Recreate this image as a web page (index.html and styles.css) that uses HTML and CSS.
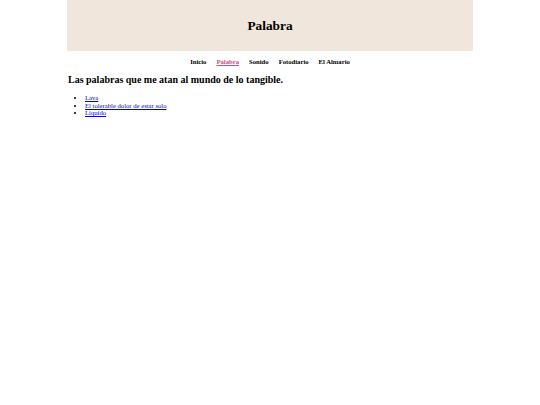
FILE: index.html
```html
<!DOCTYPE html>
<html lang="es">
<head>
<meta charset="utf-8">
<title>Palabra</title>
<link rel="stylesheet" href="styles.css">
</head>
<body>
<div class="page">
  <header class="banner">
    <h1 class="title">Palabra</h1>
  </header>
  <nav class="menu">
    <a class="menu-item" href="#">Inicio</a>
    <a class="menu-item active" href="#">Palabra</a>
    <a class="menu-item" href="#">Sonido</a>
    <a class="menu-item" href="#">Fotodiario</a>
    <a class="menu-item" href="#">El Almario</a>
  </nav>
  <main class="content">
    <h2 class="lead">Las palabras que me atan al mundo de lo tangible.</h2>
    <ul class="posts">
      <li><a href="#">Lava</a></li>
      <li><a href="#">El tolerable dolor de estar solo</a></li>
      <li><a href="#">Líquido</a></li>
    </ul>
  </main>
</div>
</body>
</html>
```

FILE: styles.css
```css
html, body {
  margin: 0;
  padding: 0;
  background: #ffffff;
}
body {
  font-family: "Liberation Serif", "Times New Roman", serif;
  color: #000;
}
.page {
  width: 406px;
  margin: 0 auto;
}
.banner {
  background: #f0e6dc;
  height: 51px;
  display: flex;
  align-items: center;
  justify-content: center;
}
.title {
  margin: 0;
  font-size: 13.33px;
  font-weight: bold;
  line-height: 1;
}
.menu {
  display: flex;
  justify-content: center;
  gap: 10px;
  margin-top: 7px;
  font-size: 6.67px;
  line-height: 8px;
}
.menu-item {
  color: #000;
  font-weight: bold;
  text-decoration: none;
}
.menu-item.active {
  color: #c8508a;
  text-decoration: underline;
}
.content {
  padding-left: 1px;
}
.lead {
  margin: 8px 0 0 0;
  font-size: 10px;
  line-height: 12px;
  font-weight: bold;
}
.posts {
  margin: 8px 0 0 0;
  padding-left: 17px;
  font-size: 6.67px;
  line-height: 7.6px;
}
.posts a {
  color: #0000ee;
}
```
